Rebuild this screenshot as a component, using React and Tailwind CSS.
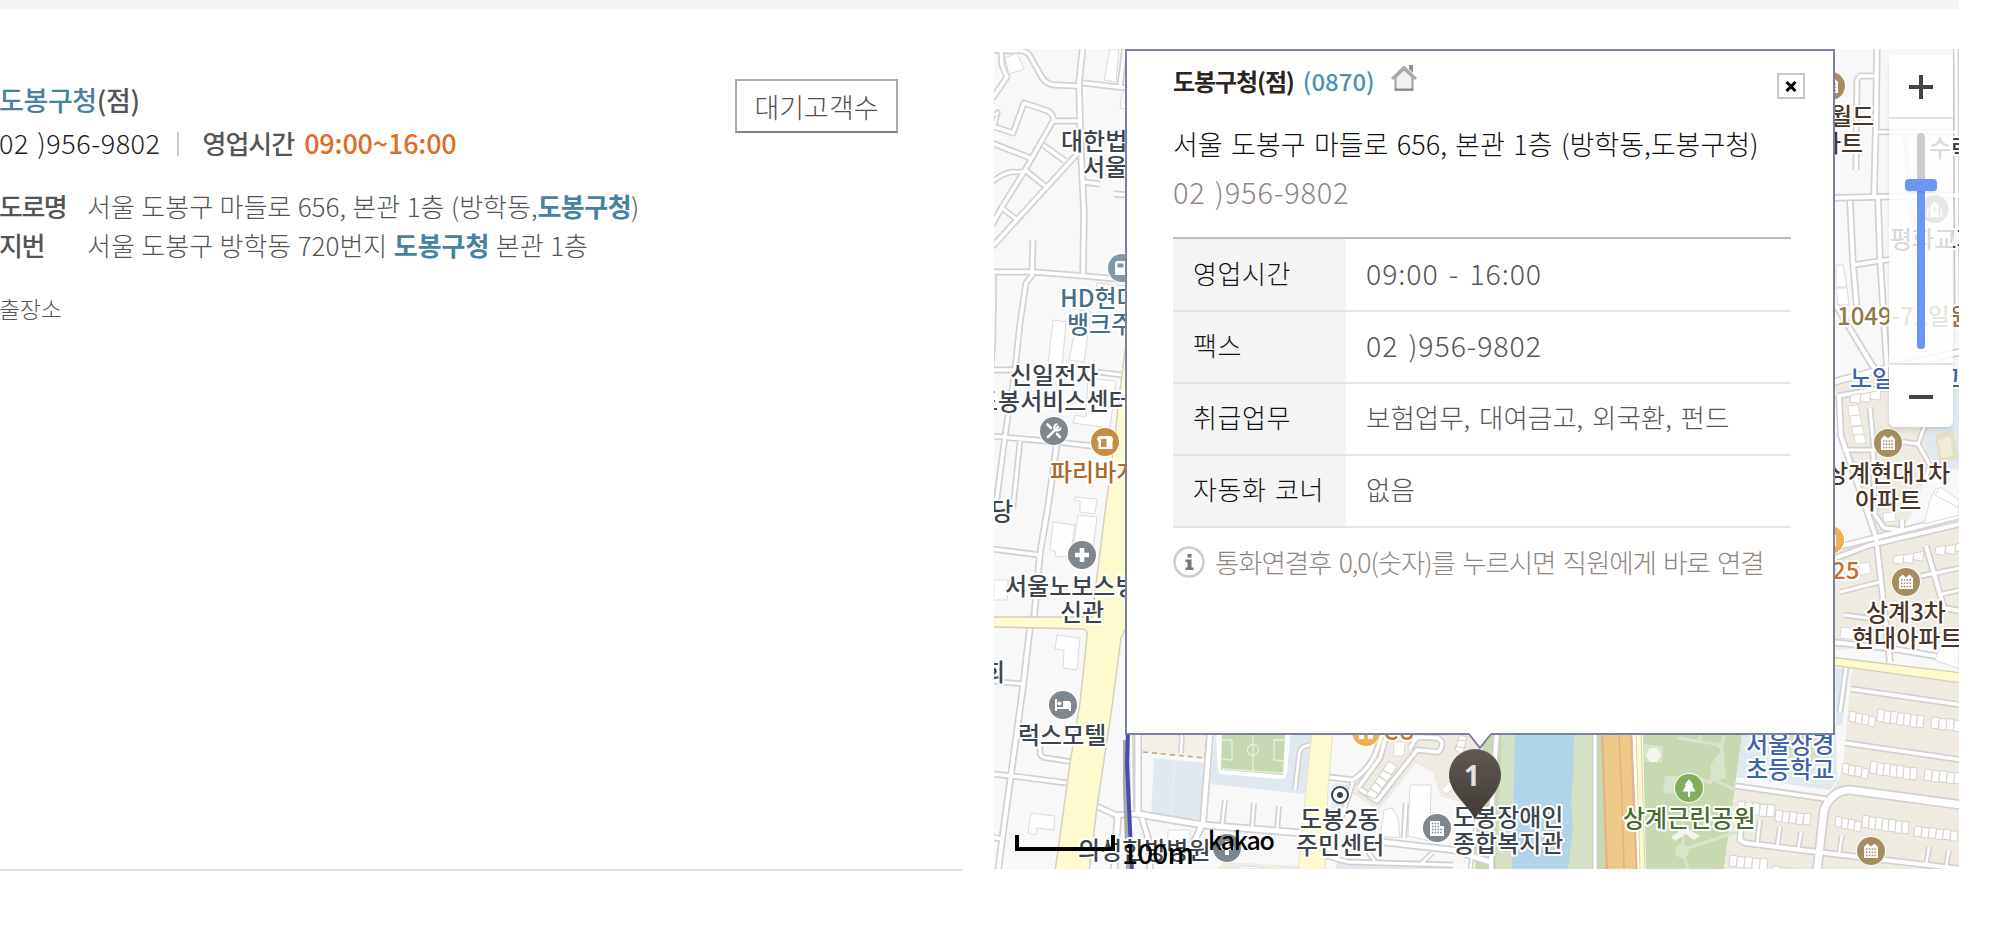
const details = [
  { label: '영업시간', value: '09:00 - 16:00', numeric: true },
  { label: '팩스', value: '02 )956-9802', numeric: true },
  { label: '취급업무', value: '보험업무, 대여금고, 외국환, 펀드' },
  { label: '자동화 코너', value: '없음' },
];

// d: path, w: inner width of the road
const roads = [
  { d: 'M1083 45L1079 83L1080 120L1081 153L1084 213L1083 275', w: 4 },
  { d: 'M994 50L1012 51Q1026 49 1030 56L1040 74Q1045 85 1056 85L1079 86', w: 3.5 },
  { d: 'M1083 83L1127 88L1135 89', w: 3.5 },
  { d: 'M1001 50L1002 65L1007 77L992 99', w: 3.5 },
  { d: 'M992 126L1013 133L1024 103L1048 111Q1053 114 1054 121L1079 121', w: 3.5 },
  { d: 'M992 143L1030 158', w: 3.5 },
  { d: 'M1053 121L1025 170L1002 207L992 225', w: 3.5 },
  { d: 'M992 247L1078 153', w: 3.5 },
  { d: 'M1043 145L1065 161', w: 3.5 },
  { d: 'M1025 170L1045 186', w: 3.5 },
  { d: 'M992 182Q1003 173 1012 172L1024 172', w: 3 },
  { d: 'M1002 208L1016 219', w: 3 },
  { d: 'M994 115L998 112L994 128', w: 2 },
  { d: 'M1125 47L1120 86', w: 3.5 },
  { d: 'M1084 182L1100 184', w: 3.5 },
  { d: 'M1114 194L1130 195', w: 3.5 },
  { d: 'M992 272L1033 272L1072 275L1130 280', w: 3.5 },
  { d: 'M1033 240L1032 272', w: 3.5 },
  { d: 'M995 274L994 340L992 370', w: 1 },
  { d: 'M1033 274L1026 283L1020 323L1015 370L1005 436L996 505', w: 3.5 },
  { d: 'M992 370L1015 370', w: 3.5 },
  { d: 'M992 436L1057 442L1110 448', w: 3.5 },
  { d: 'M1020 441L1013 508', w: 3 },
  { d: 'M1057 442L1048 507L1040 553L1034 618L1030 627L1023 687L1013 760L1003 833L998 872', w: 4 },
  { d: 'M992 549L1040 555', w: 3.5 },
  { d: 'M992 681L1023 684', w: 3 },
  { d: 'M992 774L1013 776L1067 783', w: 3.5 },
  { d: 'M992 837L1002 839', w: 3.5 },
  { d: 'M1040 740L1040 754Q1042 758 1048 758L1072 762', w: 3 },
  { d: 'M1098 372L1122 375', w: 3 },
  { d: 'M1096 806L1116 815L1138 814', w: 4 },
  { d: 'M1118 815L1114 872', w: 5 },
  { d: 'M1138 735L1138 814L1167 819L1203 825L1240 828L1302 833', w: 5 },
  { d: 'M1131 735L1132 810', w: 2 },
  { d: 'M1142 818L1150 845L1150 872', w: 4 },
  { d: 'M1210 735L1203 823L1192 846', w: 4.5 },
  { d: 'M1225 800L1222 826', w: 2.5 },
  { d: 'M1254 803L1252 829', w: 2.5 },
  { d: 'M1279 806L1277 831', w: 2.5 },
  { d: 'M1182 730L1181 753', w: 2.5 },
  { d: 'M1312 744L1303 747Q1300 749 1299 755L1295 790', w: 2.5 },
  { d: 'M1328 777L1353 780Q1368 770 1375 755L1384 730', w: 3.5 },
  { d: 'M1353 782L1335 838', w: 3 },
  { d: 'M1360 789L1377 801L1417 750L1438 752Q1442 750 1442 742L1438 738L1417 737L1410 748', w: 3.5 },
  { d: 'M1358 788L1380 758L1388 730', w: 3.5 },
  { d: 'M1406 803L1404 838', w: 3 },
  { d: 'M1326 856L1348 862L1453 865', w: 3 },
  { d: 'M1383 842L1453 850L1490 862', w: 4.5 },
  { d: 'M1367 850L1376 863M1432 853L1420 865', w: 2.5 },
  { d: 'M1497 730L1492 800L1491 872', w: 4 },
  { d: 'M1480 735L1483 770L1470 872', w: 2 },
  { d: 'M1595 730L1595 872', w: 3 },
  // north-east blocks
  { d: 'M1877 45L1876 120L1874 198', w: 4 },
  { d: 'M1876 76L1860 76L1857 80L1856 170', w: 3.5 },
  { d: 'M1877 132L1957 132', w: 3 },
  { d: 'M1956 45L1957 320', w: 3 },
  { d: 'M1830 198L1960 195', w: 4 },
  { d: 'M1850 201L1853 263L1858 322', w: 4 },
  { d: 'M1878 198L1880 258L1887 368', w: 4 },
  { d: 'M1853 265L1893 259L1896 252', w: 3.5 },
  { d: 'M1905 131L1910 200L1925 300', w: 1 },
  { d: 'M1835 304L1872 365L1878 372', w: 4 },
  { d: 'M1830 383L1875 371L1960 352', w: 5 },
  { d: 'M1839 396L1841 436L1876 537L1890 662', w: 4 },
  { d: 'M1838 396L1890 387', w: 3.5 },
  { d: 'M1843 450L1874 450L1870 408', w: 3 },
  { d: 'M1873 450L1875 515L1884 528L1902 530L1902 520', w: 3.5 },
  { d: 'M1890 440L1918 444L1925 425M1918 444L1930 465L1925 480', w: 3 },
  { d: 'M1830 560L1870 545L1960 524', w: 4 },
  { d: 'M1830 549L1870 539L1960 516', w: 4 },
  { d: 'M1926 546L1944 608L1960 611', w: 4 },
  { d: 'M1840 592L1880 582', w: 3 },
  { d: 'M1844 615L1882 620', w: 3 },
  { d: 'M1921 576L1960 568M1938 595L1960 590', w: 3 },
  { d: 'M1830 642L1887 648L1960 660', w: 4 },
  { d: 'M1846 668L1840 712', w: 3 },
  { d: 'M1851 689L1962 705', w: 3.5 },
  { d: 'M1845 743L1962 760', w: 3.5 },
  { d: 'M1736 786L1826 799', w: 3.5 },
  { d: 'M1962 805L1850 790Q1832 790 1824 810L1817 872', w: 7 },
  { d: 'M1741 824L1740 840L1745 843L1817 852L1962 869', w: 4 },
  { d: 'M1760 820L1757 845M1780 827L1777 848M1801 832L1798 850M1842 835L1839 854M1929 847L1926 865M1949 850L1946 867', w: 2.5 },
];

const houseRows = [
  { x: 1850, y: 711, n: 4, tilt: 1.4, w: 6.4, h: 10 },
  { x: 1878, y: 709, n: 7, tilt: 1, w: 6.6, h: 12 },
  { x: 1932, y: 717, n: 5, tilt: 0.8, w: 7.5, h: 11 },
  { x: 1843, y: 763, n: 4, tilt: 1.4, w: 6.4, h: 10 },
  { x: 1871, y: 761, n: 7, tilt: 1, w: 6.6, h: 12 },
  { x: 1925, y: 769, n: 5, tilt: 0.8, w: 7.5, h: 11 },
  { x: 1738, y: 801, n: 5, tilt: 0.8, w: 7.4, h: 12 },
  { x: 1776, y: 810, n: 5, tilt: 0.8, w: 7, h: 11 },
  { x: 1836, y: 816, n: 4, tilt: 1.4, w: 6.4, h: 10 },
  { x: 1863, y: 815, n: 7, tilt: 1, w: 6.6, h: 12 },
  { x: 1915, y: 826, n: 6, tilt: 0.8, w: 7.2, h: 10 },
  { x: 1730, y: 855, n: 5, tilt: 0.8, w: 7.6, h: 11 },
  { x: 1773, y: 866, n: 5, tilt: 0.8, w: 7.6, h: 11 },
  { x: 1851, y: 395, n: 3, tilt: -1.6, w: 10, h: 10 },
  { x: 1894, y: 556, n: 3, tilt: -1.6, w: 10, h: 10 },
  { x: 1936, y: 547, n: 3, tilt: -1.6, w: 10, h: 10 },
];

const buildings = [
  '1005,58 1017,53 1024,69 1009,74',
  '1110,49 1119,49 1116,82 1104,80',
  '1122,93 1130,93 1130,110 1120,108',
  '1053,320 1066,322 1062,367 1048,365',
  '1079,310 1091,312 1084,362 1069,360',
  '1097,283 1127,286 1127,296 1096,293',
  '1088,378 1116,381 1110,428 1073,423 1075,415 1086,417',
  '1075,497 1097,499 1095,514 1080,512 1080,501 1074,500',
  '1078,515 1097,517 1093,550 1073,548',
  '1053,522 1075,525 1070,556 1056,557 1055,551 1050,550',
  '994,580 1008,580 1007,600 994,600',
  '1057,635 1080,638 1077,670 1063,668 1064,650 1055,649',
  '1031,813 1055,816 1054,830 1037,828 1036,835 1028,833',
  '1168,830 1190,830 1190,842 1168,842',
  '1183,846 1200,846 1205,860 1183,858',
  '1240,866 1262,867 1262,869 1240,869',
  '1394,742 1405,742 1404,756 1393,756',
  '1410,785 1431,785 1430,841 1408,836',
  '1384,810 1392,808 1398,818 1400,838 1380,836',
  '1441,790 1449,782 1455,787 1447,794',
  '1836,265 1843,265 1847,287 1836,287',
  '1836,288 1847,288 1849,305 1838,305',
  '1848,406 1858,405 1860,415 1849,416',
  '1850,416 1860,415 1862,425 1851,426',
  '1852,427 1862,426 1864,434 1853,435',
  '1854,435 1864,434 1866,443 1855,444',
  '1883,513 1895,512 1896,521 1884,522',
  '1858,564 1869,562 1871,573 1860,575',
  '1841,627 1858,629 1857,640 1840,638',
  '1930,500 1936,488 1959,503 1959,515 1924,524',
  '1940,487 1959,500 1959,508 1935,495',
  '1941,644 1959,648 1959,669 1935,660',
];

const labels = [
  { t: '대한법률', x: 1061, y: 150 },
  { t: '서울', x: 1083, y: 176 },
  { t: 'HD현대', x: 1060, y: 307, c: '#476f8e' },
  { t: '뱅크주', x: 1067, y: 333, c: '#476f8e' },
  { t: '신일전자', x: 1010, y: 384 },
  { t: '도봉서비스센터', x: 976, y: 410 },
  { t: '파리바게', x: 1050, y: 481, c: '#b06624' },
  { t: '당', x: 991, y: 520 },
  { t: '서울노보스병원', x: 1005, y: 595 },
  { t: '신관', x: 1060, y: 621 },
  { t: '회', x: 983, y: 681 },
  { t: '럭스모텔', x: 1018, y: 744 },
  { t: '의성한방병원', x: 1078, y: 859 },
  { t: 'CU', x: 1383, y: 740, c: '#c9752e' },
  { t: '도봉2동', x: 1300, y: 828 },
  { t: '주민센터', x: 1296, y: 854 },
  { t: '도봉장애인', x: 1453, y: 826 },
  { t: '종합복지관', x: 1453, y: 852 },
  { t: '상계근린공원', x: 1623, y: 827, c: '#4a6b2f' },
  { t: '서울상경', x: 1746, y: 753, c: '#3f63ad' },
  { t: '초등학교', x: 1746, y: 778, c: '#3f63ad' },
  { t: '월드', x: 1830, y: 125, c: '#4a3528' },
  { t: '파트', x: 1819, y: 152, c: '#4a3528' },
  { t: '수락', x: 1929, y: 157 },
  { t: '평화교회', x: 1890, y: 248 },
  { t: '1049-71일원', x: 1837, y: 325, c: '#8d7c45' },
  { t: '노일중학교', x: 1850, y: 387, c: '#3f63ad' },
  { t: '상계현대1차', x: 1826, y: 482, c: '#4a3528' },
  { t: '아파트', x: 1855, y: 509, c: '#4a3528' },
  { t: '25', x: 1832, y: 579, c: '#c9702e' },
  { t: '상계3차', x: 1866, y: 621, c: '#4a3528' },
  { t: '현대아파트', x: 1852, y: 647, c: '#4a3528' },
];

function Road({ roads }) {
  return (
    <g fill="none" strokeLinejoin="round">
      {roads.map((r) => <path key={r.d} d={r.d} stroke="#d1d1d1" strokeWidth={r.w + 3.4} />)}
      {roads.map((r) => <path key={r.d} d={r.d} stroke="#fff" strokeWidth={r.w} />)}
    </g>
  );
}

function Houses({ x, y, n, tilt, w, h }) {
  return Array.from({ length: n }, (_, i) => {
    const px = x + i * w;
    const py = y + i * tilt + (i % 2) * 0.6;
    return (
      <path
        key={i}
        d={`M${px} ${py}l${w} ${tilt}l-1.2 ${h}l-${w} -${Math.abs(tilt)}z`}
        fill="#fefefe"
        stroke="#d6d3ce"
        strokeWidth="1"
      />
    );
  });
}

function Poi({ x, y, color, r = 14, children }) {
  return (
    <g transform={`translate(${x} ${y})`}>
      <circle r={r + 1} fill="#fff" />
      <circle r={r} fill={color} />
      {children}
    </g>
  );
}

function ApartmentPoi({ x, y }) {
  return (
    <Poi x={x} y={y} color="#a68c5f">
      <path d="M-7 7V-4L-3.5 -7.5L0 -4.5L3.5 -7.5L7 -4V7z" fill="#fff" />
      <path d="M-5 -2h10M-5 1.3h10M-5 4.6h10" stroke="#a68c5f" strokeWidth="1.5" strokeDasharray="1.5 1.3" />
    </Poi>
  );
}

function MapCanvas() {
  return (
    <svg className="block h-[820px] w-[965px]" viewBox="994 49 965 820">
      <defs>
        <linearGradient id="pin" x1="0" y1="0" x2="0" y2="1">
          <stop offset="0" stopColor="#625953" />
          <stop offset="1" stopColor="#3f3935" />
        </linearGradient>
        <filter id="soft" x="-30%" y="-30%" width="160%" height="160%">
          <feGaussianBlur stdDeviation="0.5" />
        </filter>
      </defs>
      <rect x="994" y="49" width="965" height="820" fill="#f8f8f8" />

      {/* Land use */}
      <path d="M1143 735H1207L1205 758L1143 752z" fill="#f3f0e9" />
      <path d="M1154 758L1204 763L1200 820L1151 816z" fill="#e0e8f0" />
      <path d="M1175 760L1171 818" stroke="#ebf0f5" strokeWidth="1" />
      <path d="M1215 735H1312L1305 794L1210 784z" fill="#e0e8f0" />
      <path d="M1216 735L1218 770Q1218 773 1222 774L1281 779Q1286 779 1287 774L1290 735z" fill="#fff" />
      <path d="M1222 735H1285L1283 775L1221 770z" fill="#c6d8b0" />
      <g fill="none" stroke="#e6eedd" strokeWidth="1.3">
        <path d="M1253 735V773M1222 740h10v20l-10 -1M1284 740h-10v20l9 1M1222 769L1283 773" />
        <circle cx="1253" cy="750" r="5.5" />
      </g>
      <path d="M1383 735H1490L1486 765L1480 808L1440 796L1433 773L1416 763L1378 811L1352 793z" fill="#f0ebe2" />
      <path d="M1335 783L1352 785L1346 800L1338 838L1328 830z" fill="#e3eaf0" />
      <path d="M1340 858L1453 862V869H1335z" fill="#e0e8f0" />
      <path d="M1225 862L1300 866V869H1216z" fill="#f0ebe2" />
      <path d="M1143 752L1205 758L1207 735" fill="none" stroke="#c5ab7c" strokeWidth="1.6" strokeDasharray="5 4" />
      <path d="M1480 735H1602L1607 869H1475z" fill="#c8d9b2" />
      <path d="M1502 735H1518L1515 869H1496z" fill="#d4e1c4" />
      <path d="M1571 735H1592L1592 869H1564z" fill="#d4e1c4" />
      <path d="M1515 735H1574L1573 777L1571 803L1573 827L1568 869H1512z" fill="#b2d4e8" />
      <path d="M1643 735H1742L1724 869H1646z" fill="#c8d9b2" />
      <path d="M1742 735L1842 725L1850 668H1835L1837 780L1830 790L1736 777z" fill="#e0e8f0" />
      <path d="M1776 735h55l-3 28l-55 -3z" fill="#d5e1c4" />
      <path d="M1736 783L1830 795L1843 770L1851 674Q1853 668 1858 669L1959 683V869H1724z" fill="#f0ebe1" />
      <path d="M1835 386L1889 374L1930 420L1930 480L1910 520L1876 535L1838 430z" fill="#f0ebe1" />
      <path d="M1835 545L1959 525V640L1835 650z" fill="#f0ebe1" />
      <path d="M1923 437L1950 385H1959V470L1934 465z" fill="#e0e8f0" />
      <path d="M1935 435L1953 430L1959 458L1940 464z" fill="#e6dfc2" />
      <path d="M1938 440L1950 437L1953 455L1942 458z" fill="#f1ecd6" />
      <path d="M1905 528L1925 480L1959 500V516z" fill="#f8f8f8" />

      {/* Park details */}
      <g fill="#d8e4cb" stroke="none">
        <path d="M1643 744l20 2l-1 17l-19 -2z" />
        <path d="M1665 776h20v19l-22 -2z" />
        <path d="M1711 764l12 -16l3 30l-16 4z" />
        <circle cx="1682" cy="851" r="7" />
      </g>
      <path d="M1677 738L1722 745L1724 735M1700 741V735M1718 745Q1728 755 1720 765L1714 780L1736 790M1688 775L1712 783M1682 850L1737 832M1682 850L1688 869M1683 820V845" fill="none" stroke="#d8e4cb" strokeWidth="3" />
      <path d="M1650 748l7 0l4 7l-4 7h-7l-4 -7z" fill="#f3f6ef" />
      <path d="M1671 837l14 -10l15 9l-6 4l-8 -6l-11 7z" fill="#f3f4f0" />

      <Road roads={roads} />

      {/* Arterials */}
      <path d="M1125 350L1118 407L1115 437L1104 520L1092 617H990V627L1082 629Q1088 629 1087 636L1080 703L1070 763L1055 872H1089L1097 807L1112 707L1121 638L1130 620V350z" fill="#fdfbcd" stroke="#d5cfbb" strokeWidth="1.5" />
      <path d="M1312 730H1333L1328 790L1325 872H1298L1305 800z" fill="#fdfbcd" stroke="#e4e0c6" strokeWidth="1" />
      <path d="M1830 657L1962 673V683L1830 665z" fill="#fdfbcd" stroke="#d5cfbb" strokeWidth="1.4" />
      <path d="M1602 730H1631L1637 872H1607z" fill="#efc988" stroke="#e2b38d" strokeWidth="2.5" />
      <path d="M1619 735L1622 800L1624 869" fill="none" stroke="#e0b08a" strokeWidth="1.5" />
      <path d="M1634 730L1639 872" stroke="#fff" strokeWidth="2.5" />
      <path d="M1636 730H1641L1645 872H1640z" fill="#fdf8c9" stroke="#d8d2b6" strokeWidth="1" />
      <path d="M1125 740V790L1128 869" fill="none" stroke="#a9a9a9" strokeWidth="4" />
      <path d="M1128 730L1127 763L1132 872" fill="none" stroke="#444eae" strokeWidth="4" />

      {/* Buildings */}
      {buildings.map((points) => (
        <polygon key={points} points={points} fill="#fefefe" stroke="#dbdbdb" strokeWidth="1" />
      ))}
      {houseRows.map((row) => <Houses key={`${row.x}-${row.y}`} {...row} />)}
      <path d="M1366 795l9 4l22 -32l-8 -6zM1455 750l4 -14h8l-4 18z" fill="#fdfdfd" stroke="#d1cfca" strokeWidth="1" />
      <path d="M1370 788l8 6M1375 782l7 6M1379 776l8 6M1383 770l9 5M1456 746l8 2M1458 740l8 1" stroke="#d1cfca" strokeWidth="1.2" />

      {/* Points of interest */}
      <Poi x={1122} y={268} color="#8199ab">
        <path d="M-7 -5Q-7 -7 -5 -7H4V7H-7z" fill="#fff" />
        <path d="M-4.500 -4.500h6v4h-6z" fill="#8199ab" />
      </Poi>
      <Poi x={1054} y={431} color="#7e868e">
        <path d="M-6 6L4 -4M-6.500 -6.500L-3 -3M3 3L6 6" stroke="#fff" strokeWidth="2.6" strokeLinecap="round" />
        <path d="M6.600 -3.500A3.200 3.200 0 1 1 3.500 -6.800" fill="none" stroke="#fff" strokeWidth="2" />
      </Poi>
      <Poi x={1105} y={442} color="#c78d46">
        <path d="M-8 -3Q-8 -6 -4 -6H4Q8 -6 8 -3Q8 -1 7.500 0V7H-6.500V-1Q-8 -1 -8 -3z" fill="#fff" />
        <path d="M-4 -3H1.500V5H-4z" fill="#c78d46" />
      </Poi>
      <Poi x={1082} y={555} color="#7e868e">
        <path d="M-2.300 -7h4.600v4.700H7v4.600H2.300V7h-4.600V2.300H-7v-4.600h4.700z" fill="#fff" />
      </Poi>
      <Poi x={1063} y={705} color="#7e868e">
        <path d="M-8 -6h2V2H8V6H6V4H-6V6H-8zM0 -4H5Q8 -4 8 -1V2H0z" fill="#fff" />
        <circle cx="-3.500" cy="-1.500" r="2.100" fill="#fff" />
      </Poi>
      <Poi x={1227} y={848} color="#7e868e">
        <path d="M-2 -7h4v5H7v4H2V7h-4V2H-7v-4h5z" fill="#fff" />
      </Poi>
      <Poi x={1366} y={732} color="#eeb050">
        <path d="M-7 -3H7V7H2V2H-2V7H-7z" fill="#fff" />
      </Poi>
      <Poi x={1437} y={828} color="#7e868e">
        <path d="M-7 -7H3V-2H7V8H-7z" fill="#fff" />
        <path d="M-5 -4.500h7M-5 -1.500h7M-5 1.500h10M-5 4.500h10" stroke="#7e868e" strokeWidth="1.500" strokeDasharray="1.500 1.200" />
      </Poi>
      <Poi x={1689} y={788} color="#82ad5b">
        <path d="M0 -9L4.500 -3H3L6.500 3.500H1V9H-1V3.500H-6.500L-3 -3H-4.500z" fill="#fff" />
      </Poi>
      <Poi x={1934.5} y={209} color="#7e868e">
        <path d="M-4 8V-3L0 -8L4 -3V8zM-7.500 8V1L-6 -1V8zM6 8V-1L7.500 1V8z" fill="#fff" />
        <path d="M0 -2.500v6M-2 -0.500h4" stroke="#7e868e" strokeWidth="1.200" />
      </Poi>
      <Poi x={1830} y={540} color="#eeb050">
        <path d="M-2 -3L6 -5V6H-2z" fill="#fff" />
      </Poi>
      <ApartmentPoi x={1831} y={86} />
      <ApartmentPoi x={1888} y={443} />
      <ApartmentPoi x={1906} y={582} />
      <ApartmentPoi x={1871} y={851} />
      <circle cx="1340" cy="795" r="8" fill="#fff" stroke="#3c434a" strokeWidth="2" />
      <circle cx="1340" cy="795" r="3" fill="#3c434a" />

      {/* Place names */}
      <g
        fontFamily="'Noto Sans CJK KR', sans-serif"
        fontSize="24"
        fontWeight="500"
        stroke="#fff"
        strokeWidth="4"
        strokeLinejoin="round"
        paintOrder="stroke"
      >
        {labels.map((l) => (
          <text key={l.t + l.x} x={l.x} y={l.y} fill={l.c || '#3c454c'}>{l.t}</text>
        ))}
      </g>

      {/* Branch marker */}
      <path d="M1475 820C1469 805 1449 793 1449 775A26 26 0 0 1 1501 775C1501 793 1481 805 1475 820z" fill="url(#pin)" filter="url(#soft)" />
      <text x="1472" y="786" textAnchor="middle" fontFamily="'Open Sans', sans-serif" fontWeight="700" fontSize="28" fill="#e2e2e2">1</text>

      {/* Scale and copyright */}
      <path d="M1017 835V849H1113V835" fill="none" stroke="#000" strokeWidth="4" />
      <g fontFamily="'Noto Sans CJK KR', sans-serif" fill="#000">
        <text x="1122" y="864" fontSize="28" fontWeight="500" letterSpacing="-0.800">100m</text>
        <text x="1208" y="850" fontSize="25" fontWeight="500" textLength="67">kakao</text>
      </g>
    </svg>
  );
}

function ZoomControl() {
  return (
    <div className="absolute left-[895px] top-[6px] w-16 overflow-hidden rounded-md shadow-md">
      <button className="flex h-16 w-full items-center justify-center border-b-2 border-[#e2e2e2] bg-white pt-0.5">
        <svg className="h-6 w-6" viewBox="0 0 24 24" stroke="#444" strokeWidth="4">
          <path d="M12 0v24M0 12h24" />
        </svg>
      </button>
      <div className="flex h-[244px] justify-center bg-white/80 pt-3.5">
        <div className="relative h-[216px] w-2 overflow-visible rounded bg-[#ccc]">
          <div className="mt-[52px] h-[164px] rounded-b bg-[#6996f7]" />
          <div className="absolute -left-3 top-[46px] h-3 w-8 rounded bg-[#6996f7] shadow" />
        </div>
      </div>
      <button className="flex h-16 w-full items-center justify-center border-t-2 border-[#e2e2e2] bg-white pt-0.5">
        <svg className="h-6 w-6" viewBox="0 0 24 24" stroke="#444" strokeWidth="4">
          <path d="M0 12h24" />
        </svg>
      </button>
    </div>
  );
}

function HomeIcon() {
  return (
    <svg className="ml-4 -mt-1.5 h-[26px] w-[26px]" viewBox="0 0 26 26">
      <path d="M18 0h4v8l-4 -4z" fill="#8f8f8f" />
      <path d="M4.500 12L13 4L21.500 12V25H4.500z" fill="#f1f1f1" stroke="#a0a0a0" strokeWidth="2" />
      <path d="M1 14L13 2.500L25 14" fill="none" stroke="#a9a9a9" strokeWidth="3" />
      <path d="M4 24.500H22" stroke="#8a8a8a" strokeWidth="2" />
    </svg>
  );
}

function BranchPopup() {
  return (
    <div className="absolute left-[131px] top-0 h-[686px] w-[710px] border-2 border-[#7b80a6] bg-white pl-[46px] pr-[42px]">
      <div className="flex h-[62px] items-center justify-between">
        <div className="-mt-[3px] flex items-center text-[24px] whitespace-nowrap">
          <strong className="font-bold tracking-[-1.1px] text-[#2a2522]">도봉구청(점)</strong>
          <span className="ml-[9px] font-medium text-[#4f8fb5]">(0870)</span>
          <HomeIcon />
        </div>
        <button className="-mr-[14px] mt-[8px] flex h-[26px] w-7 items-center justify-center border-2 border-[#c8c8c8] bg-white">
          <svg className="h-[11px] w-3" viewBox="0 0 12 11" stroke="#000" strokeWidth="3">
            <path d="M1.500 1L10.500 10M10.500 1L1.500 10" />
          </svg>
        </button>
      </div>
      <p className="mt-2 h-[46px] text-[27px] leading-[46px] font-light [word-spacing:2.4px] whitespace-nowrap text-[#111]">
        서울 도봉구 마들로 656, 본관 1층 (방학동,도봉구청)
      </p>
      <p className="h-[46px] text-[29px] leading-[48px] font-light tracking-[0.8px] [word-spacing:2px] text-[#8f8680]">02 )956-9802</p>
      <table className="mt-6 w-[618px] table-fixed border-t-2 border-[#bfbab4] text-left text-[26px] leading-[40px] font-light">
        <tbody>
          {details.map((row) => (
            <tr key={row.label} className="h-[72px] border-b-2 border-[#e6e6e6] first:h-[73px]">
              <th className="w-[173px] bg-[#f4f4f4] pb-1 pl-5 font-light tracking-[0.6px] [word-spacing:2px] whitespace-nowrap text-[#111]">{row.label}</th>
              <td className={`pb-1 pl-5 whitespace-nowrap text-[#555] ${row.numeric ? 'text-[28.5px] tracking-[0.9px] [word-spacing:3px]' : 'text-[26.5px] [word-spacing:3px]'}`}>
                {row.value}
              </td>
            </tr>
          ))}
        </tbody>
      </table>
      <div className="mt-[14px] flex items-center">
        <svg className="h-8 w-8 shrink-0" viewBox="0 0 32 32">
          <circle cx="16" cy="16" r="14.500" fill="#fff" stroke="#ccc" strokeWidth="2.500" />
          <path d="M14.500 8h4v3.500h-4zM12.500 13.500h6v8h2v2.500h-8v-2.500h2v-5.500h-2z" fill="#777" />
        </svg>
        <span className="ml-2.5 text-[26.5px] leading-[40px] font-light tracking-[-1.1px] [word-spacing:2.6px] whitespace-nowrap text-[#8f8680]">
          통화연결후 0,0(숫자)를 누르시면 직원에게 바로 연결
        </span>
      </div>
      <svg className="absolute left-[342px] top-[682px] h-4 w-[22px]" viewBox="0 0 22 16">
        <path d="M0 0H22V2L11 15L0 2z" fill="#fff" />
        <path d="M0 1L11 15L22 1" fill="none" stroke="#7b80a6" strokeWidth="2" />
      </svg>
    </div>
  );
}

function BranchSummary() {
  return (
    <section className="flex h-[822px] w-[962px] justify-between border-b-2 border-[#dedede]">
      <div className="text-[26px] font-light whitespace-nowrap text-[#555]">
        <h2 className="mt-7 -ml-px text-[27px] leading-[46px] font-medium tracking-[-0.4px]">
          <span className="text-[#4682a0]">도봉구청</span>(점)
        </h2>
        <p className="-ml-px flex h-[42px] items-center leading-[42px]">
          <span className="-mt-[3px] text-[27px] tracking-[0.5px] [word-spacing:2px] text-[#222]">02 )956-9802</span>
          <span className="ml-[17px] h-6 w-0.5 bg-[#ccc]" />
          <strong className="ml-[23px] -mt-[3px] font-medium tracking-[-1px]">영업시간</strong>
          <strong className="ml-2.5 -mt-[3px] text-[27px] font-medium tracking-[-0.2px] text-[#dc6f28]">09:00~16:00</strong>
        </p>
        <dl className="mt-[21px] -ml-px grid grid-cols-[88px_auto] leading-[39px]">
          <dt className="font-medium tracking-[-1.5px]">도로명</dt>
          <dd className="[word-spacing:0.7px]">서울 도봉구 마들로 656, 본관 1층 (방학동,<b className="font-bold tracking-[-0.5px] text-[#4682a0]">도봉구청</b>)</dd>
          <dt className="font-medium tracking-[-1.5px]">지번</dt>
          <dd className="[word-spacing:0.7px]">서울 도봉구 방학동 720번지 <b className="font-bold text-[#4682a0]">도봉구청</b> 본관 1층</dd>
        </dl>
        <p className="mt-[26px] -ml-px text-[23px] leading-[36px] tracking-[-0.3px]">출장소</p>
      </div>
      <button className="mr-16 mt-[30px] h-[54px] w-[163px] border-2 border-[#aaa] border-b-[#858080] text-[27px] leading-[52px] font-light text-[#554f48]">
        대기고객수
      </button>
    </section>
  );
}

export default function App() {
  return (
    <main className="h-[938px] w-[1996px] overflow-hidden bg-white font-['Noto_Sans_CJK_KR',sans-serif]">
      <div className="h-[9px] w-[1959px] bg-[#f5f5f5]" />
      <div className="flex gap-8 pt-10">
        <BranchSummary />
        <div className="relative h-[820px] w-[965px] overflow-hidden">
          <MapCanvas />
          <BranchPopup />
          <ZoomControl />
        </div>
      </div>
    </main>
  );
}
